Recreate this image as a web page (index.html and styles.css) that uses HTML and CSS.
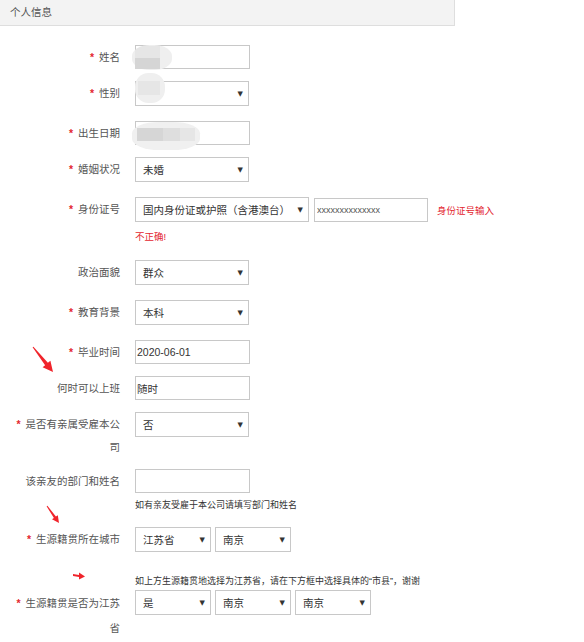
FILE: index.html
```html
<!DOCTYPE html>
<html lang="zh-CN">
	<head>
		<meta charset="UTF-8" />
		<meta name="viewport" content="width=device-width, initial-scale=1.0" />
		<title>个人信息</title>
		<link rel="stylesheet" href="styles.css">
	</head>

	<body>
		<div class="page">
			<div class="panel-heading">个人信息</div>

			<form class="info-form">
				<div class="form-row gap-12">
					<label class="form-label"><i class="req">*</i>姓名</label>
					<div class="form-field">
						<div class="masked">
							<input class="text-input" type="text" />
							<span class="blur blur-name"></span>
						</div>
					</div>
				</div>

				<div class="form-row gap-15">
					<label class="form-label"><i class="req">*</i>性别</label>
					<div class="form-field">
						<div class="masked">
							<div class="select">
								<select><option></option></select>
							</div>
							<span class="blur blur-gender"></span>
						</div>
					</div>
				</div>

				<div class="form-row gap-12">
					<label class="form-label"><i class="req">*</i>出生日期</label>
					<div class="form-field">
						<div class="masked">
							<input class="text-input" type="text" />
							<span class="blur blur-birth"></span>
						</div>
					</div>
				</div>

				<div class="form-row gap-15">
					<label class="form-label"><i class="req">*</i>婚姻状况</label>
					<div class="form-field">
						<div class="select">
							<select><option>未婚</option></select>
						</div>
					</div>
				</div>

				<div class="form-row gap-17">
					<label class="form-label"><i class="req">*</i>身份证号</label>
					<div class="form-field">
						<div class="inline-group">
							<div class="select select-wide">
								<select><option>国内身份证或护照（含港澳台）</option></select>
							</div>
							<input class="text-input id-input" type="text" value="xxxxxxxxxxxxxx" />
							<span class="error-inline">身份证号输入</span>
						</div>
						<div class="error-text">不正确!</div>
					</div>
				</div>

				<div class="form-row gap-15">
					<label class="form-label">政治面貌</label>
					<div class="form-field">
						<div class="select">
							<select><option>群众</option></select>
						</div>
					</div>
				</div>

				<div class="form-row gap-15">
					<label class="form-label"><i class="req">*</i>教育背景</label>
					<div class="form-field">
						<div class="select">
							<select><option>本科</option></select>
						</div>
					</div>
				</div>

				<div class="form-row gap-12">
					<label class="form-label"><i class="req">*</i>毕业时间</label>
					<div class="form-field">
						<input class="text-input" type="text" value="2020-06-01" />
					</div>
				</div>

				<div class="form-row gap-12">
					<label class="form-label">何时可以上班</label>
					<div class="form-field">
						<input class="text-input" type="text" value="随时" />
					</div>
				</div>

				<div class="form-row gap-10">
					<label class="form-label wrap-label"><i class="req">*</i>是否有亲属受雇本公司</label>
					<div class="form-field">
						<div class="select">
							<select><option>否</option></select>
						</div>
					</div>
				</div>

				<div class="form-row gap-16">
					<label class="form-label">该亲友的部门和姓名</label>
					<div class="form-field">
						<input class="text-input" type="text" />
						<div class="help-text help-below">如有亲友受雇于本公司请填写部门和姓名</div>
					</div>
				</div>

				<div class="form-row gap-23">
					<label class="form-label"><i class="req">*</i>生源籍贯所在城市</label>
					<div class="form-field">
						<div class="inline-group">
							<div class="select select-small">
								<select><option>江苏省</option></select>
							</div>
							<div class="select select-small">
								<select><option>南京</option></select>
							</div>
						</div>
					</div>
				</div>

				<div class="form-row">
					<label class="form-label wrap-label top-label"><i class="req">*</i>生源籍贯是否为江苏省</label>
					<div class="form-field">
						<div class="help-text help-above">如上方生源籍贯地选择为江苏省，请在下方框中选择具体的“市县”，谢谢</div>
						<div class="inline-group">
							<div class="select select-small">
								<select><option>是</option></select>
							</div>
							<div class="select select-small">
								<select><option>南京</option></select>
							</div>
							<div class="select select-small">
								<select><option>南京</option></select>
							</div>
						</div>
					</div>
				</div>
			</form>

			<!-- red annotation arrows drawn over the form -->
			<svg class="mark mark-1" width="30" height="32" viewBox="0 0 30 32">
				<polygon points="4.6,4.3 17.1,22.2 14.6,24.2 25,29 22.4,17.8 19.9,19.8 5.4,3.7" />
			</svg>
			<svg class="mark mark-2" width="18" height="23" viewBox="0 0 18 23">
				<polygon points="2.6,3.3 9.9,15 8,16.3 15,20 13.8,12.2 11.9,13.6 3.4,2.7" />
			</svg>
			<svg class="mark mark-3" width="16" height="10" viewBox="0 0 16 10">
				<polygon points="1,3 7,4 7,1.5 13,5.5 7,8.5 7,6 1,5" />
			</svg>
		</div>
	</body>
</html>
```

FILE: styles.css
```css
:root {
	--text-color: #333;
	--label-color: #555;
	--border-color: #c8c8c8;
	--heading-bg: #f3f3f3;
	--heading-border: #dedede;
	--red: #e3262f;
}

body {
	margin: 0;
	font-family: "Liberation Sans", "Noto Sans CJK SC", sans-serif;
	font-size: 10.5px;
	color: var(--text-color);
	background-color: #fff;
}

.page {
	position: relative;
	width: 584px;
	height: 642px;
	overflow: hidden;
}

.panel-heading {
	width: 444px;
	height: 25px;
	line-height: 25px;
	padding-left: 10px;
	background-color: var(--heading-bg);
	border-bottom: 1px solid var(--heading-border);
	border-right: 1px solid var(--heading-border);
	color: var(--label-color);
	font-size: 10.5px;
}

.info-form {
	padding: 19px 0 0 12px;
}

/* one label + control per row */
.form-row {
	display: flex;
	align-items: flex-start;
}

.gap-10 { margin-bottom: 10px; }
.gap-12 { margin-bottom: 12px; }
.gap-15 { margin-bottom: 15px; }
.gap-16 { margin-bottom: 16px; }
.gap-17 { margin-bottom: 17px; }
.gap-23 { margin-bottom: 23px; }

.form-label {
	flex: 0 0 108px;
	width: 108px;
	height: 24px;
	margin-right: 15px;
	text-align: right;
	line-height: 24px;
	color: var(--label-color);
}

.wrap-label {
	height: 46px;
	line-height: 23px;
	padding-top: 1px;
}

.top-label {
	height: 50px;
	line-height: 25px;
	padding-top: 16px;
}

.req {
	font-style: normal;
	font-weight: bold;
	color: var(--red);
	margin-right: 5px;
}

.form-field {
	display: flex;
	flex-direction: column;
}

.inline-group {
	display: flex;
	align-items: center;
	gap: 4px;
	height: 25px;
}

.text-input {
	box-sizing: border-box;
	width: 115px;
	height: 24px;
	margin: 0;
	padding: 0 1px;
	border: 1px solid var(--border-color);
	background: #fff;
	font-family: inherit;
	font-size: 10.5px;
	color: var(--text-color);
	outline: none;
}

.id-input {
	width: 114px;
	margin-left: 1px;
	font-size: 9px;
	color: #555;
	padding-left: 2px;
}

/* select with its own small arrow */
.select {
	position: relative;
	width: 114px;
	height: 25px;
}

.select select {
	box-sizing: border-box;
	width: 100%;
	height: 25px;
	margin: 0;
	padding: 0 0 0 7px;
	border: 1px solid var(--border-color);
	border-radius: 0;
	background: #fff;
	font-family: inherit;
	font-size: 10.5px;
	color: var(--text-color);
	appearance: none;
	-webkit-appearance: none;
	outline: none;
}

.select:after {
	content: "▼";
	position: absolute;
	right: 6px;
	top: 50%;
	transform: translateY(-50%);
	font-family: "DejaVu Sans", sans-serif;
	font-size: 7px;
	line-height: 7px;
	color: #333;
	pointer-events: none;
}

.select-wide {
	width: 174px;
}

.select-small {
	width: 76px;
}

.error-inline {
	margin-left: 5px;
	font-size: 9.5px;
	color: var(--red);
}

.error-text {
	height: 12px;
	margin-top: 9px;
	line-height: 12px;
	font-size: 9.5px;
	color: var(--red);
}

.help-text {
	height: 12px;
	font-size: 9px;
	line-height: 12px;
	color: var(--text-color);
	white-space: nowrap;
}

.help-below {
	margin-top: 6px;
}

.help-above {
	margin-bottom: 3px;
}

/* blurred personal data */
.masked {
	position: relative;
}

.blur {
	position: absolute;
	border-radius: 50%;
	background-color: #eeeeee;
	pointer-events: none;
}

.blur:before {
	content: "";
	position: absolute;
}

.blur-name {
	left: -3px;
	top: 0;
	width: 40px;
	height: 25px;
	border-radius: 45%;
	background: linear-gradient(#e6e6e6, #e6e6e6) 3px 1px / 25px 12px no-repeat, #efefef;
}

.blur-name:before {
	left: 3px;
	top: 13px;
	width: 25px;
	height: 11px;
	background-color: #d5d5d5;
}

.blur-gender {
	left: 0;
	top: -8px;
	width: 30px;
	height: 30px;
	border-radius: 45%;
	background-color: #efefef;
}

.blur-gender:before {
	left: 3px;
	top: 8px;
	width: 22px;
	height: 14px;
	background-color: #e6e6e6;
}

.blur-birth {
	left: -3px;
	top: 1px;
	width: 68px;
	height: 28px;
	border-radius: 40%;
	background-color: #f0f0f0;
}

.blur-birth:before {
	left: 5px;
	top: 6px;
	width: 58px;
	height: 13px;
	background: linear-gradient(to right, #d6d6d6 0 45%, #dedede 45% 75%, #e6e6e6 75%);
}

/* annotation arrows */
.mark {
	position: absolute;
	fill: #f0242b;
}

.mark-1 {
	left: 28px;
	top: 343px;
}

.mark-2 {
	left: 44px;
	top: 503px;
}

.mark-3 {
	left: 72px;
	top: 571px;
}
```
